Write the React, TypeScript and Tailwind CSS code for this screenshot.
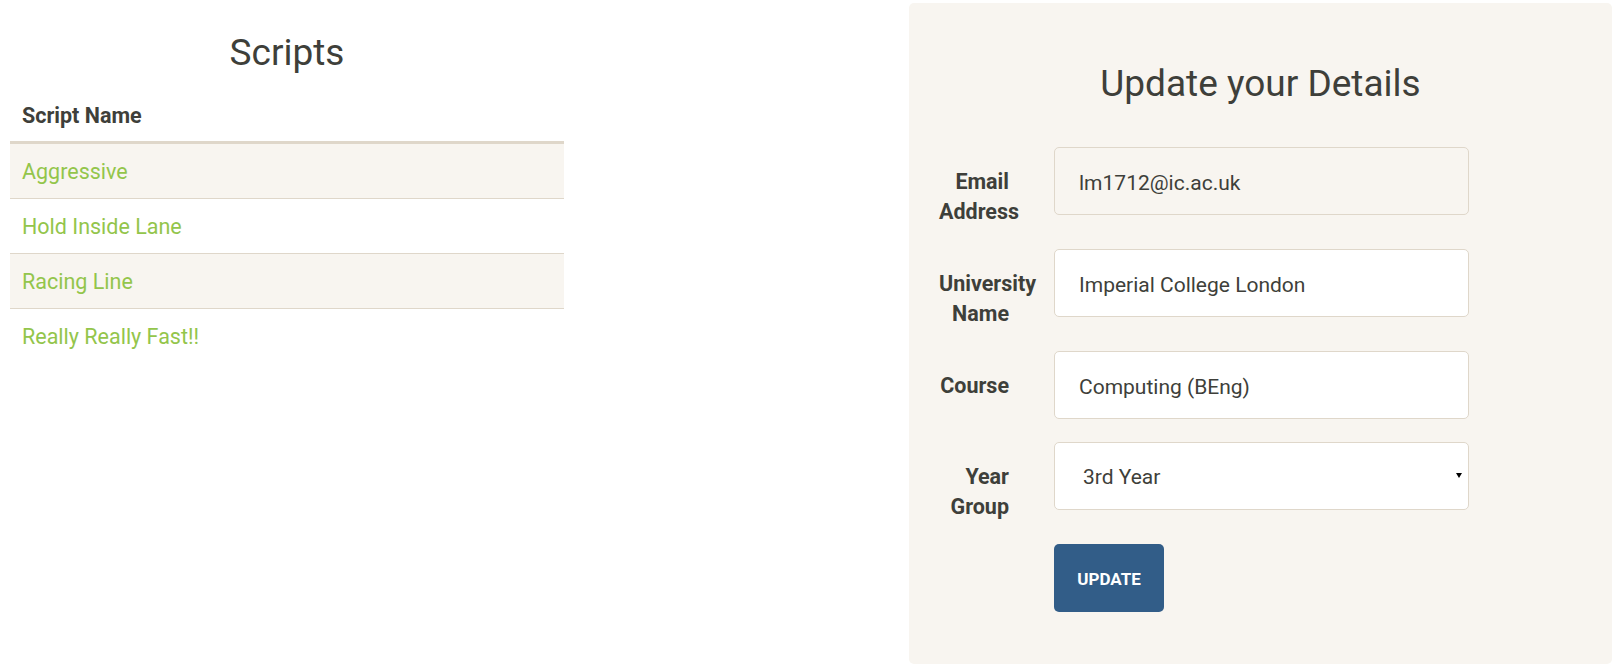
import React from 'react';

const scripts = ['Aggressive', 'Hold Inside Lane', 'Racing Line', 'Really Really Fast!!'];

const ScriptsTable: React.FC = () => (
  <div className="ml-[10px] w-[554px] shrink-0 pt-[33px]">
    <h2 className="mb-[16px] text-center text-[37px] font-normal leading-[40px]">Scripts</h2>
    <table className="w-full border-separate border-spacing-0 text-[21.5px] leading-[30px]">
      <thead>
        <tr>
          <th className="border-b-[3px] border-[#dfd7ca] px-3 pt-3 pb-[10px] text-left font-bold">
            Script Name
          </th>
        </tr>
      </thead>
      <tbody>
        {scripts.map((name, i) => (
          <tr key={name} className={i % 2 === 0 ? 'bg-[#f8f5f0]' : 'bg-white'}>
            <td
              className={
                i > 0
                  ? 'border-t border-[#dfd7ca] px-3 pt-[13px] pb-[11px]'
                  : 'px-3 pt-[13px] pb-[11px]'
              }
            >
              <a href="#" className="text-[#93c54b] no-underline">
                {name}
              </a>
            </td>
          </tr>
        ))}
      </tbody>
    </table>
  </div>
);

const labelClass =
  'ml-[30px] w-[70px] shrink-0 pt-[20px] text-right text-[21.5px] font-bold leading-[30px]';
const inputClass =
  'ml-[45px] h-[68px] w-[415px] rounded-[5px] border border-[#dfd7ca] px-[24px] pt-[3px] text-[21px] text-[#3e3f3a] outline-none';

const DetailsPanel: React.FC = () => (
  <div className="mt-[3px] mr-[1px] ml-auto w-[703px] rounded-[5px] bg-[#f8f5f0] pt-[61px] pb-[52px]">
    <h2 className="text-center text-[37px] font-normal leading-[40px]">Update your Details</h2>
    <form className="mt-[43px]" onSubmit={(e) => e.preventDefault()}>
      <div className="mb-[22px] flex items-start">
        <label className={labelClass}>Email Address</label>
        <input className={`${inputClass} bg-[#f8f5f0]`} readOnly value="lm1712@ic.ac.uk" />
      </div>
      <div className="mb-[22px] flex items-start">
        <label className={labelClass}>University Name</label>
        <input className={`${inputClass} bg-white`} defaultValue="Imperial College London" />
      </div>
      <div className="mb-[23px] flex items-start">
        <label className={labelClass}>Course</label>
        <input className={`${inputClass} bg-white`} defaultValue="Computing (BEng)" />
      </div>
      <div className="mb-[22px] flex items-start">
        <label className={labelClass}>Year Group</label>
        <div className="relative ml-[45px] w-[415px]">
          <select
            className="h-[68px] w-full appearance-none rounded-[5px] border border-[#dfd7ca] bg-white pt-[4px] pl-[28px] text-[21px] text-[#3e3f3a] outline-none"
            defaultValue="3rd Year"
          >
            <option>1st Year</option>
            <option>2nd Year</option>
            <option>3rd Year</option>
            <option>4th Year</option>
          </select>
          <svg
            className="pointer-events-none absolute top-[31px] right-[7px]"
            width="6"
            height="5"
            viewBox="0 0 6 5"
          >
            <path d="M0 0h6L3 5z" fill="#000" />
          </svg>
        </div>
      </div>
      <div className="ml-[145px]">
        <button
          type="submit"
          className="h-[68px] w-[110px] rounded-[5px] bg-[#325d88] pt-[3px] text-[17px] font-bold uppercase text-white"
        >
          Update
        </button>
      </div>
    </form>
  </div>
);

export default function App() {
  return (
    <div className="flex min-h-[670px] w-full items-start bg-white font-['Roboto',sans-serif] text-[#3e3f3a]">
      <ScriptsTable />
      <DetailsPanel />
    </div>
  );
}
